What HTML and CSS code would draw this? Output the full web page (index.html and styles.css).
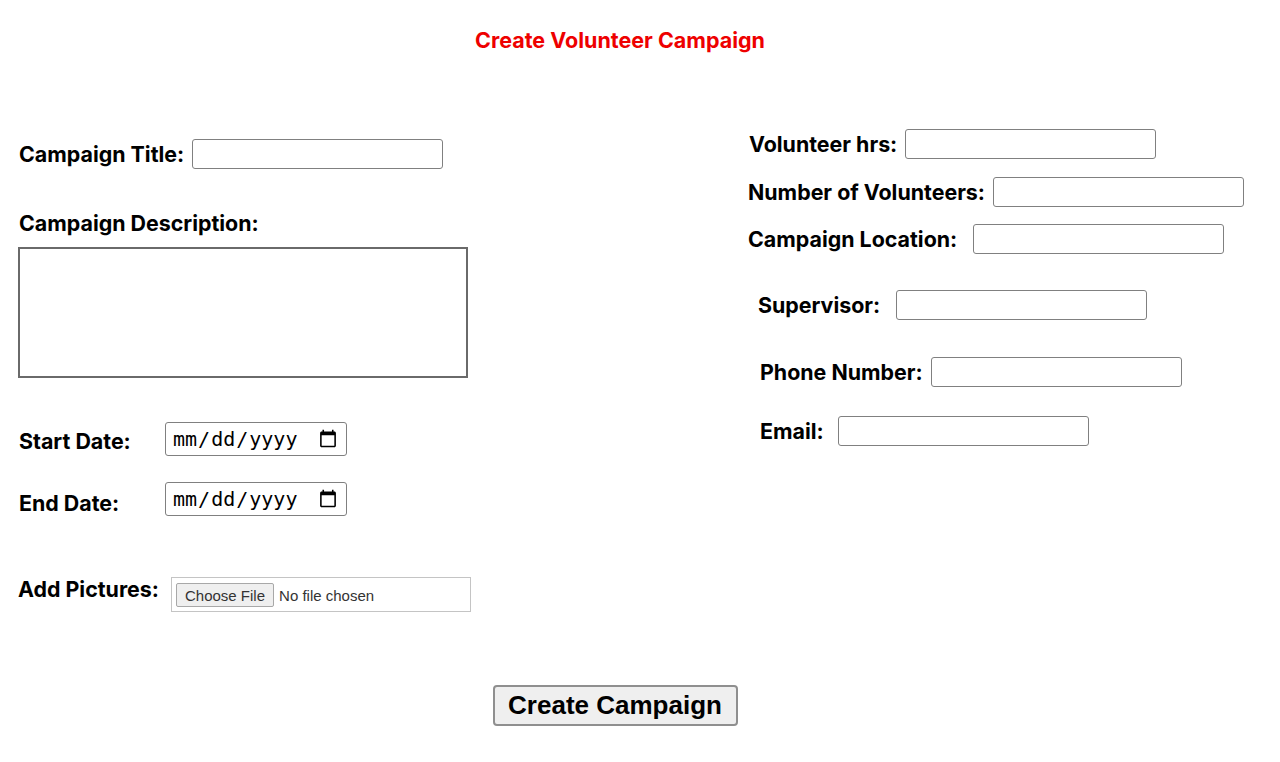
FILE: index.html
```html
<!DOCTYPE html>
<html>
<head>
<meta charset="utf-8">
<link rel="stylesheet" href="styles.css">
</head>
<body>
<header class="page-head">
  <h1 class="page-title">Create Volunteer Campaign</h1>
</header>
<form class="campaign-form">
  <div class="col col-left">
    <div class="row row-title">
      <label class="lbl" for="title">Campaign Title:</label>
      <input class="txt" id="title" type="text">
    </div>
    <div class="row-desc">
      <label class="lbl" for="desc">Campaign Description:</label>
      <textarea class="area" id="desc"></textarea>
    </div>
    <div class="row row-start">
      <label class="lbl lbl-date" for="start">Start Date:</label>
      <input class="date" id="start" type="date">
    </div>
    <div class="row row-end">
      <label class="lbl lbl-date lbl-end" for="end">End Date:</label>
      <input class="date" id="end" type="date">
    </div>
    <div class="row row-pics">
      <label class="lbl lbl-pics" for="pics">Add Pictures:</label>
      <input class="file" id="pics" type="file">
    </div>
  </div>
  <div class="col col-right">
    <div class="row r-hrs">
      <label class="lbl" for="hrs">Volunteer hrs:</label>
      <input class="txt" id="hrs" type="text">
    </div>
    <div class="row r-num">
      <label class="lbl" for="num">Number of Volunteers:</label>
      <input class="txt" id="num" type="text">
    </div>
    <div class="row r-loc">
      <label class="lbl" for="loc">Campaign Location:</label>
      <input class="txt gap-wide" id="loc" type="text">
    </div>
    <div class="row r-sup">
      <label class="lbl" for="sup">Supervisor:</label>
      <input class="txt gap-wide" id="sup" type="text">
    </div>
    <div class="row r-phone">
      <label class="lbl" for="phone">Phone Number:</label>
      <input class="txt" id="phone" type="text">
    </div>
    <div class="row r-email">
      <label class="lbl" for="email">Email:</label>
      <input class="txt gap-mid" id="email" type="text">
    </div>
  </div>
  <div class="actions">
    <button class="submit" type="button">Create Campaign</button>
  </div>
</form>
</body>
</html>
```

FILE: styles.css
```css
html, body {
  margin: 0;
  padding: 0;
  background: #ffffff;
}

body {
  font-family: Inter, "Noto Sans", sans-serif;
  color: #000;
  width: 1280px;
  height: 762px;
  overflow: hidden;
}

.page-head {
  padding: 28px 40px 0 0;
  text-align: center;
}

.page-title {
  margin: 0;
  font-size: 21.5px;
  font-weight: 700;
  color: #ee0000;
  line-height: 24px;
}

.campaign-form {
  display: grid;
  grid-template-columns: 730px 1fr;
}

.col-left {
  padding-left: 19px;
  display: flex;
  flex-direction: column;
}

.col-right {
  padding-left: 18px;
  display: flex;
  flex-direction: column;
}

.row {
  display: flex;
  align-items: center;
}

.lbl {
  font-size: 21.4px;
  font-weight: 700;
  line-height: 24px;
  white-space: nowrap;
}

.txt {
  box-sizing: border-box;
  width: 251px;
  height: 30px;
  margin: 0 0 0 8px;
  border: 1px solid #808080;
  border-radius: 3px;
  background: #fff;
  padding: 0 4px;
}

.gap-wide { margin-left: 16px; }
.gap-mid { margin-left: 14px; }

.row-title { margin-top: 87px; }

.row-desc {
  margin-top: 42px;
  display: flex;
  flex-direction: column;
}

.area {
  box-sizing: border-box;
  width: 450px;
  height: 131px;
  margin: 12px 0 0 -1px;
  border: 2px solid #6a6a6a;
  border-radius: 0;
  resize: none;
  padding: 2px;
}

.lbl-date {
  width: 146px;
  padding-top: 3px;
}

.lbl-end {
  padding-top: 8px;
}

.date {
  box-sizing: border-box;
  width: 182px;
  height: 34px;
  margin: 0;
  padding: 0 6px;
  border: 1px solid #808080;
  border-radius: 3px;
  font-family: "DejaVu Sans Mono", monospace;
  font-size: 20px;
  color: #000;
  background: #fff;
}

.row-start { margin-top: 44px; }
.row-end { margin-top: 26px; }

.row-pics {
  margin-top: 61px;
  margin-left: -1px;
  align-items: flex-start;
}

.lbl-pics {
  width: 153px;
  padding-top: 0;
}

.file {
  box-sizing: border-box;
  width: 300px;
  height: 35px;
  padding: 5px 4px;
  border: 1px solid #c4c4c4;
  font-family: "Liberation Sans", Arial, sans-serif;
  font-size: 15px;
  color: #333;
  background: #fff;
}

.file::file-selector-button {
  font-family: "Liberation Sans", Arial, sans-serif;
  font-size: 15px;
  height: 24px;
  padding: 0 8px;
  margin-right: 5px;
  border: 1px solid #a8a8a8;
  border-radius: 2px;
  background: #efefef;
  color: #333;
}

.r-hrs { margin-top: 77px; margin-left: 1px; }
.r-num { margin-top: 18px; }
.r-loc { margin-top: 17px; }
.r-sup { margin-top: 36px; margin-left: 10px; }
.r-phone { margin-top: 37px; margin-left: 12px; }
.r-email { margin-top: 29px; margin-left: 12px; }

.actions {
  grid-column: 1 / 3;
  display: flex;
  justify-content: center;
  padding-right: 50px;
  margin-top: 73px;
}

.submit {
  box-sizing: border-box;
  width: 245px;
  height: 41px;
  font-family: "Liberation Sans", Arial, sans-serif;
  font-size: 26px;
  font-weight: 700;
  color: #000;
  background: #efefef;
  border: 2px solid #8f8f8f;
  border-radius: 4px;
  padding: 0;
}
```
